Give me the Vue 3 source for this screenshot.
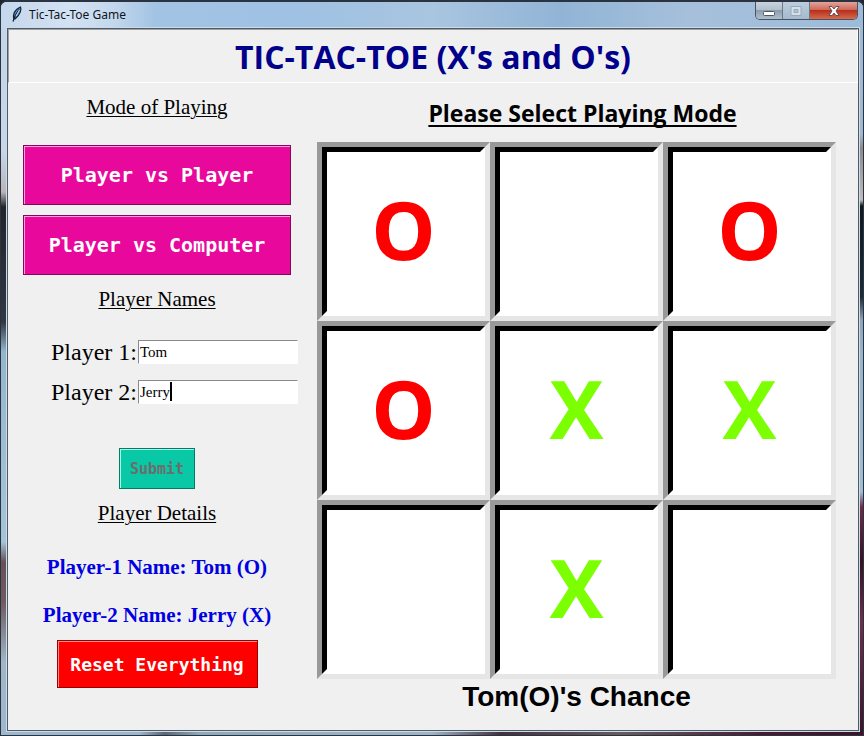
<script setup>
import { ref } from 'vue'

const player1 = ref('Tom')
const player2 = ref('Jerry')
const board = ref(['O', '', 'O', 'O', 'X', 'X', '', 'X', ''])
const turn = ref('O')

function play(i) {
  if (board.value[i]) return
  board.value[i] = turn.value
  turn.value = turn.value === 'O' ? 'X' : 'O'
}

function reset() {
  board.value = Array(9).fill('')
  turn.value = 'O'
}
</script>

<template>
  <div class="window">
    <header class="titlebar">
      <svg class="feather" viewBox="0 0 12 16" aria-hidden="true">
        <path d="M3 13C1.500 9 3 4 9.500 1C10.500 3 10 8 4 13Z" fill="#5d93c8" stroke="#14233c" stroke-width="1.200" />
        <path d="M2 15.500L4 10L8 3.500" fill="none" stroke="#101a2c" stroke-width="1.200" />
        <path d="M5 10L8.300 4" fill="none" stroke="#d9ecfb" stroke-width="0.900" />
      </svg>
      <span class="caption">Tic-Tac-Toe Game</span>
      <div class="controls">
        <button class="ctl min" type="button" aria-label="Minimize">
          <svg viewBox="0 0 14 12"><rect x="1.500" y="6.500" width="11" height="4" rx="1" fill="#fff" stroke="#4d5766" /></svg>
        </button>
        <button class="ctl max" type="button" aria-label="Maximize" disabled>
          <svg viewBox="0 0 14 12"><path d="M2 1.500H12V10.500H2ZM5 4.500V7.500H9V4.500Z" fill="#d5dfe9" fill-rule="evenodd" stroke="#98a8b9" /></svg>
        </button>
        <button class="ctl close" type="button" aria-label="Close">
          <svg viewBox="0 0 14 12"><path d="M2 1.500H5L7 4L9 1.500H12L9 6L12 10.500H9L7 8L5 10.500H2L5 6Z" fill="#fff" stroke="#5c4450" stroke-width="0.900" /></svg>
        </button>
      </div>
    </header>

    <main class="client">
      <h1 class="banner">TIC-TAC-TOE (X's and O's)</h1>
      <div class="content">
        <section class="side">
          <h2 class="heading">Mode of Playing</h2>
          <div class="modes">
            <button class="btn mode" type="button">Player vs Player</button>
            <button class="btn mode" type="button">Player vs Computer</button>
          </div>
          <h2 class="heading names">Player Names</h2>
          <form class="form" @submit.prevent>
            <div class="field">
              <label for="p1">Player 1:</label>
              <input id="p1" v-model="player1" type="text" autocomplete="off" spellcheck="false" />
            </div>
            <div class="field">
              <label for="p2">Player 2:</label>
              <div class="entry">
                <input id="p2" v-model="player2" type="text" autocomplete="off" spellcheck="false" />
                <span class="caret"></span>
              </div>
            </div>
            <button class="btn submit" type="submit" disabled>Submit</button>
          </form>
          <h2 class="heading details">Player Details</h2>
          <p class="detail">Player-1 Name: {{ player1 }} (O)</p>
          <p class="detail">Player-2 Name: {{ player2 }} (X)</p>
          <button class="btn reset" type="button" @click="reset">Reset Everything</button>
        </section>

        <section class="game">
          <h2 class="prompt">Please Select Playing Mode</h2>
          <div class="board">
            <button
              v-for="(mark, i) in board"
              :key="i"
              class="cell"
              type="button"
              :aria-label="'Square ' + (i + 1)"
              @click="play(i)"
            >
              <span class="face" :class="mark === 'X' ? 'cross' : 'nought'">{{ mark }}</span>
            </button>
          </div>
          <p class="status">{{ turn === 'O' ? player1 : player2 }}({{ turn }})'s Chance</p>
        </section>
      </div>
    </main>
  </div>
</template>

<style>
body {
  margin: 0;
  background: #20242f;
}
</style>

<style scoped>
* {
  box-sizing: border-box;
}
h1,
h2,
p {
  margin: 0;
}
button {
  font: inherit;
}
.window {
  display: flex;
  flex-direction: column;
  min-height: 100vh;
  padding: 0 4px 4px 6px;
  border: 1px solid #2b3240;
  border-top-width: 2px;
  border-radius: 7px 7px 0 0;
  background:
    linear-gradient(90deg, #9db8cd 0, #9db8cd 16%, #5b6670 19%, #91a8b8 23%, #a0b4c4 50%, #44303c 58%, #665c5e 72%, #481c30 88%, #3b1426 100%) bottom / 100% 5px no-repeat,
    linear-gradient(180deg, #c3d5ea 0, #c8d6e8 150px, #b9b4b8 190px, #23252c 205px, #303844 320px, #94b6cd 350px, #a4c4d8 540px, #665055 560px, #6f5a5e 600px, #9fb6c8 660px, #9db8cd 100%) left / 50% 100% no-repeat,
    linear-gradient(180deg, #9dbbd6 0, #a3b8d0 132px, #8c8a8c 146px, #c0bcbc 198px, #10171d 204px, #1c2a33 295px, #8fa4b8 318px, #97b4ca 350px, #9fbdd3 490px, #6c2c45 505px, #33131f 560px, #6b3048 620px, #3b1426 100%) right / 50% 100% no-repeat;
}
.titlebar {
  display: flex;
  align-items: flex-start;
  height: 26px;
  margin: 0 -4px 0 -6px;
  padding: 0 5px 0 10px;
  border-radius: 6px 6px 0 0;
  background: linear-gradient(90deg, #c5d7ec 0, #d3e2f3 8%, #c3d8ed 13%, #a2c3e4 18%, #9fc1e3 35%, #a9c5e0 50%, #91b4d6 65%, #a6c0db 80%, #9cbbd9 100%);
}
.feather {
  width: 12px;
  height: 16px;
  margin-top: 4px;
}
.caption {
  margin: 5px 0 0 6px;
  font: 12px/16px 'Noto Sans', 'Open Sans', sans-serif;
  color: #10141c;
}
.controls {
  display: flex;
  height: 18px;
  margin-left: auto;
  border: 1px solid #4a5362;
  border-top: 0;
  border-radius: 0 0 5px 5px;
  overflow: hidden;
}
.ctl {
  display: flex;
  align-items: center;
  justify-content: center;
  width: 27px;
  padding: 0;
  border: 0;
  border-right: 1px solid #6d7989;
  background: linear-gradient(#c9d3de 0, #b4c0cd 45%, #8e9dad 50%, #adc0d0 100%);
}
.ctl svg {
  width: 14px;
  height: 12px;
}
.ctl.max {
  background: linear-gradient(#bccddd, #a5bacf);
}
.ctl.close {
  width: 47px;
  border-right: 0;
  background: linear-gradient(#e0a598 0, #cf6a5b 45%, #b8301c 50%, #d66a4c 100%);
}
.client {
  flex: 1;
  border: 1px solid #4d5a68;
  background: #f0f0f0;
  box-shadow: 0 0 0 1px #cbdbe8;
}
.banner {
  padding: 7px 0 5px;
  border: 1px solid #fff;
  border-top-color: #a0a0a0;
  border-left-color: #a0a0a0;
  font: bold 32px/40px 'Open Sans', sans-serif;
  color: #00008b;
  text-align: center;
}
.content {
  display: grid;
  grid-template-columns: 300fr 540fr;
  padding-right: 10px;
}
.side {
  display: flex;
  flex-direction: column;
  align-items: center;
  padding: 12px 2px 0 0;
  font-family: 'Liberation Serif', serif;
}
.heading {
  font-size: 21px;
  font-weight: normal;
  line-height: 24px;
  text-decoration: underline;
  text-decoration-thickness: 1px;
  text-underline-offset: 2px;
}
.modes {
  display: grid;
  gap: 10px;
  align-self: stretch;
  margin: 26px 15px 0;
}
.btn {
  padding: 0;
  border: 1px solid #82085c;
  font-family: 'DejaVu Sans Mono', monospace;
  font-weight: bold;
}
.mode {
  height: 60px;
  background: #e8089b;
  box-shadow: inset 1px 1px #ff9fdf;
  font-size: 20px;
  color: #fff;
}
.names {
  margin-top: 12px;
}
.form {
  display: flex;
  flex-direction: column;
  align-items: center;
  gap: 16px;
  align-self: stretch;
  margin-top: 29px;
}
.field {
  display: flex;
  align-items: center;
  align-self: stretch;
  height: 24px;
  padding: 0 8px 0 43px;
}
.field label {
  width: 87px;
  font-size: 24px;
  line-height: 24px;
}
.field input {
  flex: 1;
  width: 100%;
  min-width: 0;
  height: 24px;
  padding: 0 1px;
  border: 1px solid #fff;
  border-top-color: #8a8a8a;
  border-left-color: #8a8a8a;
  outline: 0;
  background: #fff;
  font: 15px/20px 'Liberation Serif', serif;
  color: #000;
}
.entry {
  position: relative;
  display: flex;
  flex: 1;
}
.caret {
  position: absolute;
  top: 2px;
  left: 32px;
  width: 2px;
  height: 19px;
  background: #000;
}
.submit {
  width: 76px;
  height: 41px;
  margin-top: 28px;
  border-color: #067a62;
  background: #08c8a5;
  box-shadow: inset 1px 1px #a0ffec;
  font-size: 15px;
  color: #6d6d6d;
}
.details {
  margin-top: 12px;
}
.detail {
  margin-top: 30px;
  font-size: 21px;
  font-weight: bold;
  line-height: 24px;
  color: #0000e0;
}
.detail + .detail {
  margin-top: 24px;
}
.reset {
  width: 201px;
  height: 48px;
  margin-top: 13px;
  border-color: #900;
  background: #f00;
  box-shadow: inset 1px 1px #ff8f8f;
  font-size: 18px;
  color: #fff;
}
.game {
  padding: 15px 12px 0 9px;
  text-align: center;
}
.prompt {
  padding-left: 12px;
  font: bold 23px/30px 'Open Sans', sans-serif;
  text-decoration: underline;
  text-decoration-thickness: 2px;
  text-underline-offset: 3px;
  text-decoration-skip-ink: none;
}
.board {
  display: grid;
  grid-template-columns: repeat(3, 1fr);
  margin-top: 14px;
}
.cell {
  display: flex;
  height: 179px;
  padding: 0;
  border: 5px solid #e6e6e6;
  border-top-color: #999;
  border-left-color: #999;
  background: #fff;
}
.face {
  flex: 1;
  align-self: stretch;
  display: flex;
  align-items: center;
  justify-content: center;
  padding-bottom: 5px;
  border: 5px solid #fff;
  border-top-color: #000;
  border-left-color: #000;
  font: bold 81px/96px 'Open Sans', sans-serif;
}
.nought {
  color: #f00;
}
.cross {
  color: #7cff00;
}
.status {
  margin-top: 2px;
  font: bold 28px/32px 'Liberation Sans', sans-serif;
}
</style>
